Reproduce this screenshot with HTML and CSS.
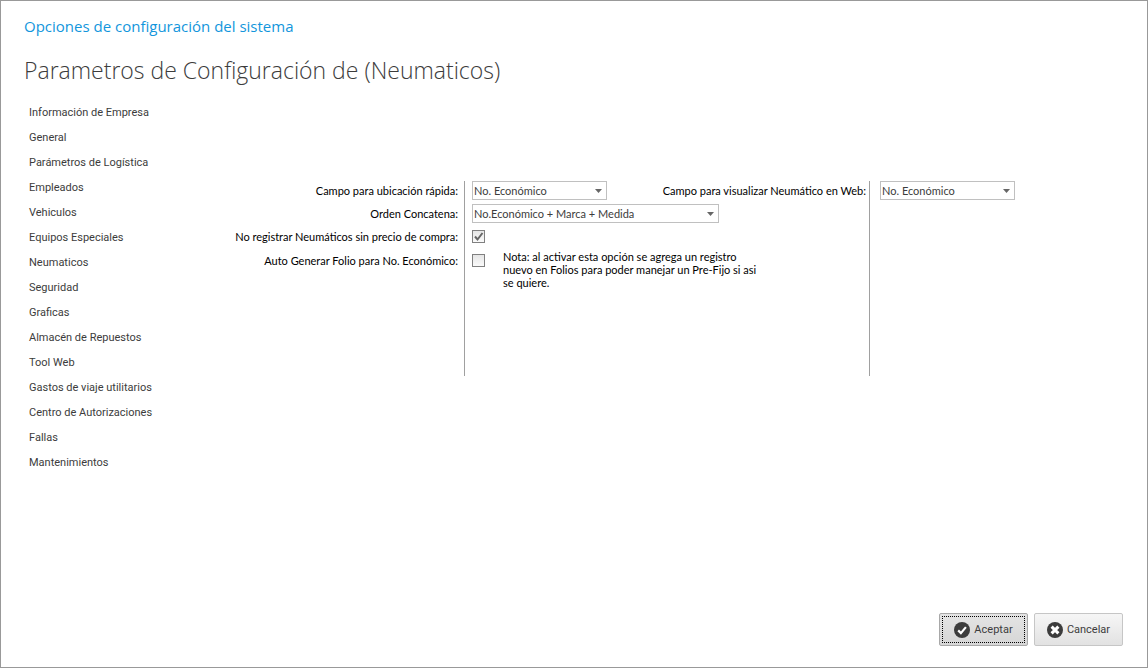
FILE: index.html
```html
<!DOCTYPE html>
<html lang="es">
<head>
    <meta charset="utf-8">
    <title>Opciones de configuración del sistema</title>
    <link rel="stylesheet" href="styles.css">
</head>
<body>
    <header class="header">
        <p class="window-title">Opciones de configuración del sistema</p>
        <h1>Parametros de Configuración de (Neumaticos)</h1>
    </header>

    <div class="content">
        <nav class="sidebar">
            <a href="#empresa">Información de Empresa</a>
            <a href="#general">General</a>
            <a href="#logistica">Parámetros de Logística</a>
            <a href="#empleados">Empleados</a>
            <a href="#vehiculos">Vehiculos</a>
            <a href="#equipos">Equipos Especiales</a>
            <a href="#neumaticos">Neumaticos</a>
            <a href="#seguridad">Seguridad</a>
            <a href="#graficas">Graficas</a>
            <a href="#almacen">Almacén de Repuestos</a>
            <a href="#toolweb">Tool Web</a>
            <a href="#gastos">Gastos de viaje utilitarios</a>
            <a href="#autorizaciones">Centro de Autorizaciones</a>
            <a href="#fallas">Fallas</a>
            <a href="#mantenimientos">Mantenimientos</a>
        </nav>

        <form class="panel" id="configForm">
            <div class="labels">
                <label for="campoRapido">Campo para ubicación rápida:</label>
                <label for="ordenConcatena">Orden Concatena:</label>
                <label for="sinPrecio">No registrar Neumáticos sin precio de compra:</label>
                <label for="autoFolio">Auto Generar Folio para No. Económico:</label>
            </div>

            <div class="controls">
                <div class="row">
                    <select id="campoRapido">
                        <option>No. Económico</option>
                    </select>
                    <label class="web-label" for="campoWeb">Campo para visualizar Neumático en Web:</label>
                </div>
                <div class="row">
                    <select id="ordenConcatena" class="wide">
                        <option>No.Económico + Marca + Medida</option>
                    </select>
                </div>
                <div class="row">
                    <input type="checkbox" id="sinPrecio" checked>
                </div>
                <div class="row">
                    <input type="checkbox" id="autoFolio" aria-describedby="notaFolio">
                </div>
                <p class="note" id="notaFolio">Nota: al activar esta opción se agrega un registro nuevo en Folios para poder manejar un Pre-Fijo si asi se quiere.</p>
            </div>

            <div class="controls controls-web">
                <div class="row">
                    <select id="campoWeb">
                        <option>No. Económico</option>
                    </select>
                </div>
            </div>
        </form>
    </div>

    <footer class="footer">
        <button type="submit" form="configForm" class="default">
            <svg width="16" height="16" viewBox="0 0 16 16">
                <circle cx="8" cy="8" r="8" fill="#3c3c3c"/>
                <path d="M4.2 8.4l2.7 2.7 5-6" fill="none" stroke="#fff" stroke-width="2.2"/>
            </svg>
            Aceptar
        </button>
        <button type="button">
            <svg width="16" height="16" viewBox="0 0 16 16">
                <circle cx="8" cy="8" r="8" fill="#3c3c3c"/>
                <path d="M4.6 4.6l6.8 6.8M11.4 4.6l-6.8 6.8" fill="none" stroke="#fff" stroke-width="3"/>
            </svg>
            Cancelar
        </button>
    </footer>
</body>
</html>
```
FILE: styles.css
```css
:root {
    --title-color: #1296dc;
    --text-color: #3c3c3c;
    --border-color: #c0c0c0;
    --line-color: #a0a0a0;
}

* {
    box-sizing: border-box;
    margin: 0;
    padding: 0;
}

body {
    display: flex;
    flex-direction: column;
    min-height: 100vh;
    border: 1px solid #999;
    background: #fff;
    color: var(--text-color);
    font-family: Roboto, "Liberation Sans", sans-serif;
    font-size: 11px;
}

.header {
    padding: 13px 23px 0;
    font-family: "Segoe UI", "Open Sans", sans-serif;
}

.window-title {
    font-size: 15px;
    line-height: 24px;
    color: var(--title-color);
}

.header h1 {
    margin-top: 14px;
    font-size: 23px;
    font-weight: 300;
    line-height: 36px;
}

.content {
    display: flex;
    flex: 1;
    padding-top: 12px;
}

.sidebar {
    display: flex;
    flex-direction: column;
    flex: 0 0 200px;
    padding-left: 28px;
}

.sidebar a {
    line-height: 25px;
    color: var(--text-color);
    text-decoration: none;
}

.panel {
    display: grid;
    flex: 1;
    grid-template-columns: 263px 405fr 278fr;
    align-items: start;
    padding-top: 81px;
    color: #000;
    font-family: Lato, "Liberation Sans", sans-serif;
}

.labels,
.controls {
    display: grid;
    grid-template-rows: 19px 19px 19px 21px;
    row-gap: 4px;
    align-items: center;
}

.labels {
    justify-items: end;
    padding-right: 6px;
}

.controls {
    align-content: start;
    min-height: 195px;
    padding-left: 7px;
    border-left: 1px solid var(--line-color);
}

.controls-web {
    padding-left: 10px;
}

.row {
    display: flex;
    align-items: center;
    justify-content: space-between;
}

.web-label {
    padding-right: 3px;
}

/* La nota comparte fila con la última casilla */
.note {
    grid-row: 4 / span 2;
    grid-column: 1;
    align-self: start;
    width: 256px;
    margin-left: 31px;
    line-height: 13px;
}

.row:nth-child(4) {
    grid-row: 4;
    grid-column: 1;
}

select {
    width: 135px;
    height: 19px;
    padding: 0 16px 0 1px;
    border: 1px solid var(--border-color);
    appearance: none;
    background: url('data:image/svg+xml,<svg xmlns="http://www.w3.org/2000/svg" width="7" height="4"><path d="M0 0h7L3.5 4z" fill="%23666"/></svg>') no-repeat right 4px center #fff;
    color: var(--text-color);
    font: inherit;
}

select.wide {
    width: 247px;
}

input[type="checkbox"] {
    width: 13px;
    height: 13px;
    border: 1px solid #808080;
    appearance: none;
    background: linear-gradient(#e6e6e6, #fafafa);
}

input[type="checkbox"]:checked {
    background: url('data:image/svg+xml,<svg xmlns="http://www.w3.org/2000/svg" width="11" height="11"><path d="M2 5.5l2.5 3 5-6.5" fill="none" stroke="%23666" stroke-width="2"/></svg>') no-repeat center, linear-gradient(#e6e6e6, #fafafa);
}

.footer {
    display: flex;
    gap: 6px;
    justify-content: flex-end;
    padding: 0 24px 21px;
}

button {
    display: flex;
    align-items: center;
    justify-content: center;
    gap: 4px;
    width: 89px;
    height: 33px;
    border: 1px solid #c6c6c6;
    border-radius: 2px;
    background: linear-gradient(#f6f6f6, #e2e2e2);
    color: var(--text-color);
    font: inherit;
}

button.default {
    border-color: #a8a8a8;
    outline: 1px dotted #000;
    outline-offset: -4px;
    background: linear-gradient(#e4e4e4, #d6d6d6);
}
```
